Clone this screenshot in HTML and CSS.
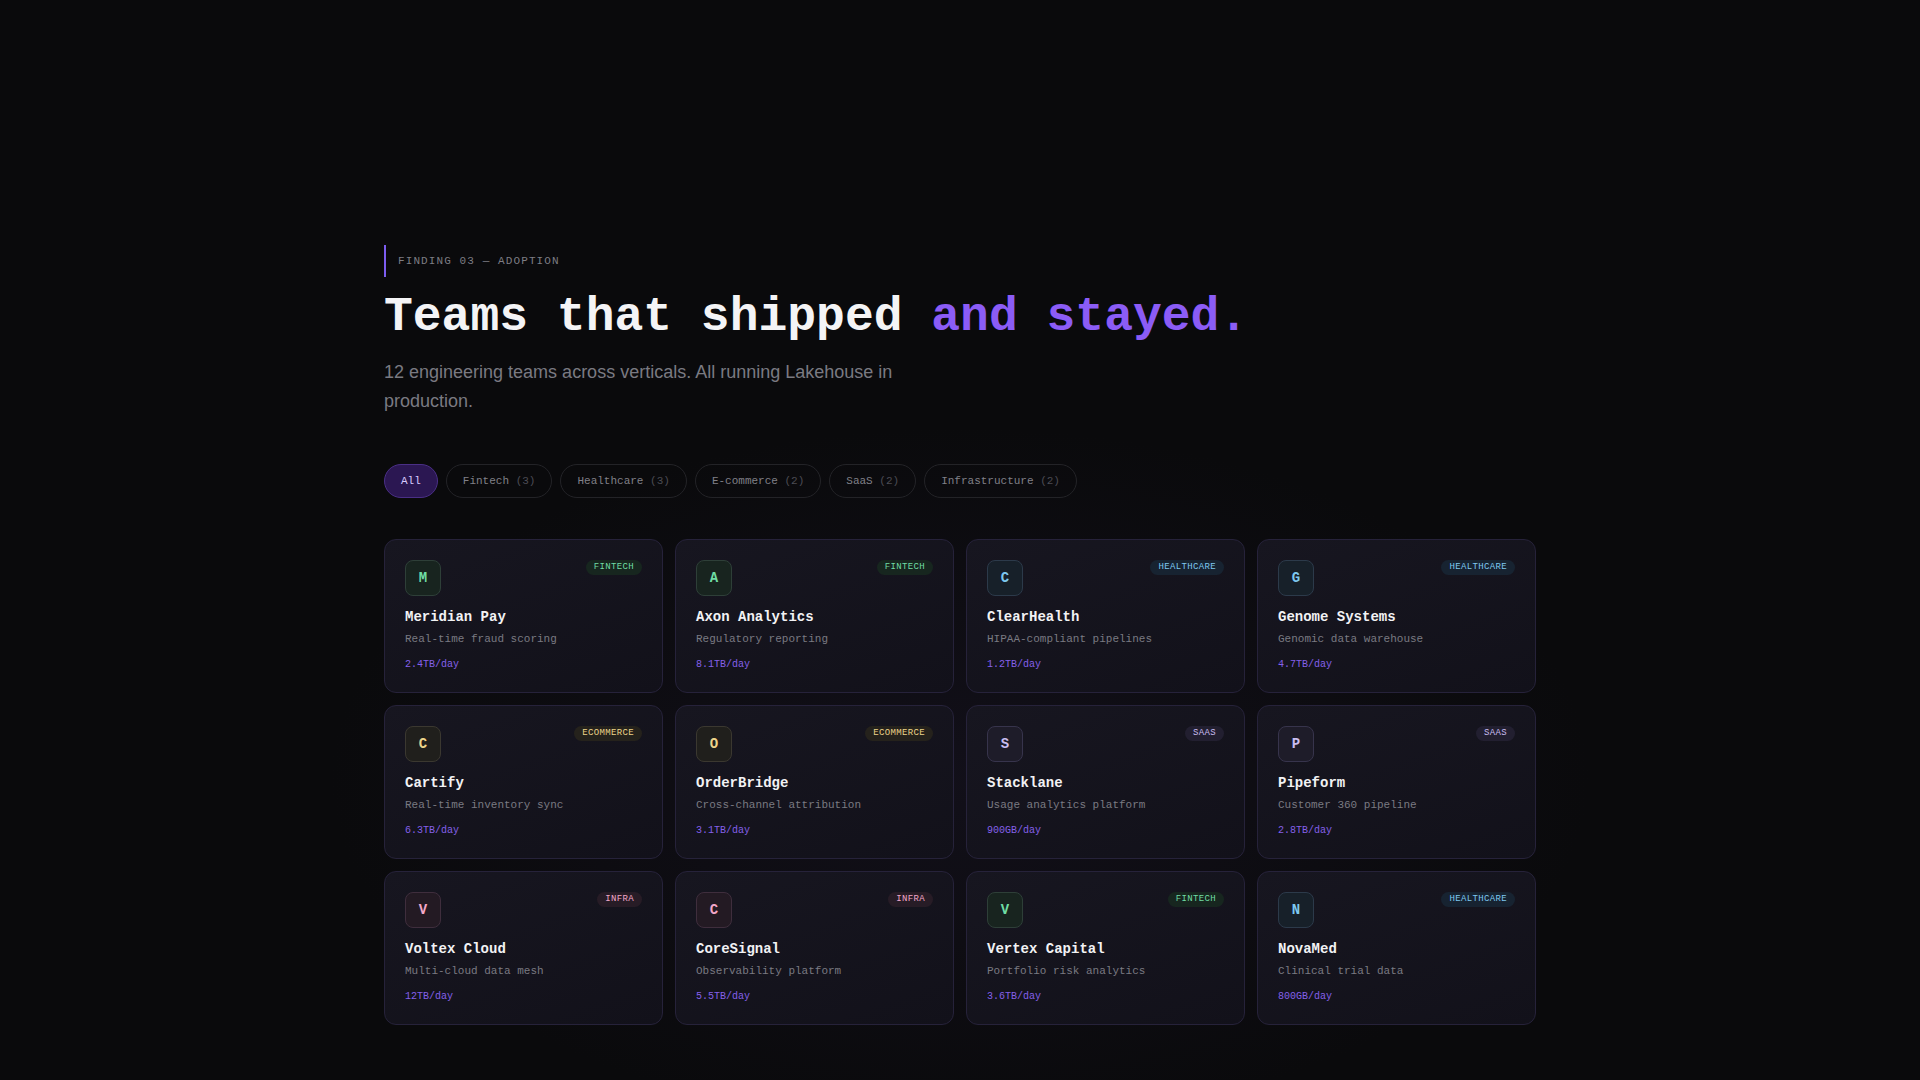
FILE: index.html
```html
<!DOCTYPE html>
<html lang="en">
<head>
<meta charset="utf-8">
<title>Teams that shipped and stayed.</title>
<link rel="stylesheet" href="styles.css">
</head>
<body>
<main class="section">
  <div class="eyebrow">FINDING 03 — ADOPTION</div>
  <h1 class="title">Teams that shipped <span class="accent">and stayed.</span></h1>
  <p class="lede">12 engineering teams across verticals. All running Lakehouse in production.</p>

  <div class="filters">
    <button class="pill pill-active">All</button>
    <button class="pill">Fintech <span class="count">(3)</span></button>
    <button class="pill">Healthcare <span class="count">(3)</span></button>
    <button class="pill">E-commerce <span class="count">(2)</span></button>
    <button class="pill">SaaS <span class="count">(2)</span></button>
    <button class="pill">Infrastructure <span class="count">(2)</span></button>
  </div>

  <div class="grid">
    <article class="card v-fintech">
      <div class="card-top"><div class="mark">M</div><span class="tag">FINTECH</span></div>
      <h3 class="name">Meridian Pay</h3>
      <p class="desc">Real-time fraud scoring</p>
      <p class="metric">2.4TB/day</p>
    </article>
    <article class="card v-fintech">
      <div class="card-top"><div class="mark">A</div><span class="tag">FINTECH</span></div>
      <h3 class="name">Axon Analytics</h3>
      <p class="desc">Regulatory reporting</p>
      <p class="metric">8.1TB/day</p>
    </article>
    <article class="card v-health">
      <div class="card-top"><div class="mark">C</div><span class="tag">HEALTHCARE</span></div>
      <h3 class="name">ClearHealth</h3>
      <p class="desc">HIPAA-compliant pipelines</p>
      <p class="metric">1.2TB/day</p>
    </article>
    <article class="card v-health">
      <div class="card-top"><div class="mark">G</div><span class="tag">HEALTHCARE</span></div>
      <h3 class="name">Genome Systems</h3>
      <p class="desc">Genomic data warehouse</p>
      <p class="metric">4.7TB/day</p>
    </article>

    <article class="card v-ecom">
      <div class="card-top"><div class="mark">C</div><span class="tag">ECOMMERCE</span></div>
      <h3 class="name">Cartify</h3>
      <p class="desc">Real-time inventory sync</p>
      <p class="metric">6.3TB/day</p>
    </article>
    <article class="card v-ecom">
      <div class="card-top"><div class="mark">O</div><span class="tag">ECOMMERCE</span></div>
      <h3 class="name">OrderBridge</h3>
      <p class="desc">Cross-channel attribution</p>
      <p class="metric">3.1TB/day</p>
    </article>
    <article class="card v-saas">
      <div class="card-top"><div class="mark">S</div><span class="tag">SAAS</span></div>
      <h3 class="name">Stacklane</h3>
      <p class="desc">Usage analytics platform</p>
      <p class="metric">900GB/day</p>
    </article>
    <article class="card v-saas">
      <div class="card-top"><div class="mark">P</div><span class="tag">SAAS</span></div>
      <h3 class="name">Pipeform</h3>
      <p class="desc">Customer 360 pipeline</p>
      <p class="metric">2.8TB/day</p>
    </article>

    <article class="card v-infra">
      <div class="card-top"><div class="mark">V</div><span class="tag">INFRA</span></div>
      <h3 class="name">Voltex Cloud</h3>
      <p class="desc">Multi-cloud data mesh</p>
      <p class="metric">12TB/day</p>
    </article>
    <article class="card v-infra">
      <div class="card-top"><div class="mark">C</div><span class="tag">INFRA</span></div>
      <h3 class="name">CoreSignal</h3>
      <p class="desc">Observability platform</p>
      <p class="metric">5.5TB/day</p>
    </article>
    <article class="card v-fintech">
      <div class="card-top"><div class="mark">V</div><span class="tag">FINTECH</span></div>
      <h3 class="name">Vertex Capital</h3>
      <p class="desc">Portfolio risk analytics</p>
      <p class="metric">3.6TB/day</p>
    </article>
    <article class="card v-health">
      <div class="card-top"><div class="mark">N</div><span class="tag">HEALTHCARE</span></div>
      <h3 class="name">NovaMed</h3>
      <p class="desc">Clinical trial data</p>
      <p class="metric">800GB/day</p>
    </article>
  </div>
</main>
</body>
</html>
```

FILE: styles.css
```css
* { box-sizing: border-box; }

html, body {
  margin: 0;
  padding: 0;
  min-height: 100%;
}

body {
  background:
    radial-gradient(ellipse 900px 500px at 50% 72%, rgba(24, 20, 36, 0.55), rgba(10, 10, 12, 0) 70%),
    #0a0a0c;
  color: #ededf0;
  font-family: "Liberation Mono", "DejaVu Sans Mono", monospace;
  min-height: 1080px;
}

.section {
  max-width: 1152px;
  margin: 0 auto;
  padding: 245px 0 40px;
}

.eyebrow {
  border-left: 2px solid #7c5cf0;
  padding: 8px 0 8px 12px;
  font-size: 11px;
  line-height: 16px;
  letter-spacing: 0.1em;
  color: #7d7d84;
}

.title {
  margin: 14px 0 0;
  font-size: 48px;
  line-height: 53px;
  font-weight: 700;
  color: #f4f4f6;
  letter-spacing: 0;
}

.accent { color: #8b5cf6; }

.lede {
  margin: 14px 0 0;
  max-width: 540px;
  font-family: "Liberation Sans", Arial, sans-serif;
  font-size: 18px;
  line-height: 29px;
  color: #7a7a82;
}

.filters {
  display: flex;
  gap: 8px;
  margin-top: 48px;
}

.pill {
  font-family: "Liberation Mono", monospace;
  font-size: 11px;
  line-height: 14px;
  height: 34px;
  padding: 0 16px;
  border-radius: 999px;
  border: 1px solid #232327;
  background: transparent;
  color: #808088;
  cursor: pointer;
}

.pill .count { color: #4c4c54; }

.pill-active {
  background: #2b1752;
  border-color: #4a2f86;
  color: #d9ccff;
}

.grid {
  display: grid;
  grid-template-columns: repeat(4, 1fr);
  gap: 12px;
  margin-top: 41px;
}

.card {
  border: 1px solid #26223a;
  border-radius: 12px;
  padding: 20px 20px 20px;
  background: linear-gradient(160deg, #171620 0%, #12111a 100%);
}

.card-top {
  display: flex;
  justify-content: space-between;
  align-items: flex-start;
}

.mark {
  width: 36px;
  height: 36px;
  border-radius: 8px;
  display: flex;
  align-items: center;
  justify-content: center;
  font-size: 14px;
  font-weight: 700;
  border: 1px solid var(--mk-border);
  background: var(--mk-bg);
  color: var(--c);
}

.tag {
  font-size: 9px;
  line-height: 11px;
  letter-spacing: 0.04em;
  padding: 2px 8px;
  border-radius: 999px;
  background: var(--tag-bg);
  color: var(--c);
  margin-top: 0;
}

.name {
  margin: 11px 0 0;
  font-size: 14px;
  line-height: 20px;
  font-weight: 700;
  color: #f2f2f4;
}

.desc {
  margin: 4px 0 0;
  font-size: 11px;
  line-height: 16px;
  color: #7a7a82;
}

.metric {
  margin: 11px 0 0;
  font-size: 10px;
  line-height: 14px;
  color: #8560ea;
}

.v-fintech { --c: #6fdca4; --mk-bg: #18241f; --mk-border: #2e3f38; --tag-bg: #17261f; }
.v-health  { --c: #7ec8ef; --mk-bg: #172029; --mk-border: #2c3a4a; --tag-bg: #172331; }
.v-ecom    { --c: #ecd48a; --mk-bg: #201f1c; --mk-border: #3b3830; --tag-bg: #25221c; }
.v-saas    { --c: #c9bdf0; --mk-bg: #1e1c29; --mk-border: #37344c; --tag-bg: #221f30; }
.v-infra   { --c: #f2a7c8; --mk-bg: #231a23; --mk-border: #3f2e3d; --tag-bg: #271c26; }
```
